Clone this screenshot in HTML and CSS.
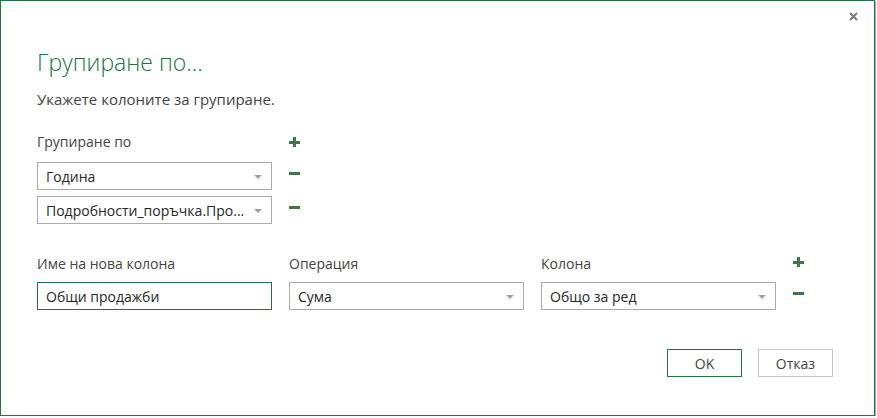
FILE: index.html
```html
<!DOCTYPE html>
<html lang="bg">
<head>
  <meta charset="UTF-8">
  <title>Групиране по</title>
<link rel="stylesheet" href="styles.css">
</head>
<body>
<div class="dialog">
  <div class="dialog-head">
    <button class="close" type="button" aria-label="Затвори">
      <svg width="9" height="9" viewBox="0 0 9 9"><path d="M1 1 L8 8 M8 1 L1 8" stroke="#7f7f7f" stroke-width="2.2"/></svg>
    </button>
  </div>

  <h1 class="title">Групиране по…</h1>
  <p class="intro">Укажете колоните за групиране.</p>

  <div class="group">
    <div class="row row-label">
      <span class="field label">Групиране по</span>
      <span class="icon plus"></span>
    </div>
    <div class="row row-select">
      <div class="field select"><span>Година</span><i class="arrow"></i></div>
      <span class="icon minus"></span>
    </div>
    <div class="row row-select">
      <div class="field select"><span>Подробности_поръчка.Про...</span><i class="arrow"></i></div>
      <span class="icon minus"></span>
    </div>
  </div>

  <div class="aggs">
    <div class="row row-label">
      <span class="field label">Име на нова колона</span>
      <span class="field label">Операция</span>
      <span class="field label">Колона</span>
      <span class="icon plus"></span>
    </div>
    <div class="row row-select">
      <div class="field input">Общи продажби</div>
      <div class="field select"><span>Сума</span><i class="arrow"></i></div>
      <div class="field select"><span>Общо за ред</span><i class="arrow"></i></div>
      <span class="icon minus"></span>
    </div>
  </div>

  <div class="actions">
    <button class="btn btn-ok" type="button">OK</button>
    <button class="btn" type="button">Отказ</button>
  </div>
</div>
</body>
</html>
```

FILE: styles.css
```css
* {
  box-sizing: border-box;
  margin: 0;
}

body {
  margin: 0;
  background: #fff;
  font-family: "Open Sans", "Noto Sans", sans-serif;
  font-size: 14px;
  color: #444;
}

.dialog {
  width: 875px;
  height: 416px;
  border: 1px solid #217346;
  box-shadow: 1px 1px 0 #a9a9a9;
  padding: 0 0 0 36px;
}

.dialog-head {
  display: flex;
  justify-content: flex-end;
  height: 33px;
  padding: 11px 16px 0 0;
}

.close {
  width: 9px;
  height: 9px;
  padding: 0;
  border: 0;
  background: none;
  display: block;
}

.close svg {
  display: block;
}

.title {
  margin-top: 12px;
  font-size: 23px;
  font-weight: 300;
  line-height: 32px;
  color: #217346;
}

.intro {
  margin-top: 11px;
  font-size: 15px;
  line-height: 20px;
  color: #444;
}

.group {
  margin-top: 23px;
}

.row {
  display: flex;
  column-gap: 17px;
}

.row-label {
  height: 20px;
  line-height: 20px;
  margin-bottom: 10px;
}

.row-select {
  height: 28px;
  margin-bottom: 6px;
}

.field {
  width: 235px;
  flex: none;
}

.select, .input {
  height: 28px;
  border: 1px solid #ababab;
  display: flex;
  align-items: center;
  justify-content: space-between;
  padding: 0 9px 0 8px;
  color: #262626;
  white-space: nowrap;
  overflow: hidden;
}

.input {
  border-color: #217346;
}

.arrow {
  width: 0;
  height: 0;
  border-left: 4px solid transparent;
  border-right: 4px solid transparent;
  border-top: 4px solid #a0a0a0;
  margin-top: 2px;
}

.icon {
  position: relative;
  width: 11px;
  flex: none;
}

.row-select .icon {
  height: 3px;
  margin-top: 10px;
}

.minus {
  background: #3b7a46;
}

.plus {
  height: 10px;
  margin-top: 5px;
}

.plus::before, .plus::after {
  content: "";
  position: absolute;
  background: #3b7a46;
}

.plus::before {
  left: 0;
  right: 0;
  top: 4px;
  height: 3px;
}

.plus::after {
  top: 0;
  bottom: 0;
  left: 4px;
  width: 3px;
}

.aggs {
  margin-top: 30px;
}

.aggs .row-label {
  margin-bottom: 8px;
}

.aggs .row-label .plus {
  margin-top: 3px;
}

.aggs .row-select .icon {
  margin-top: 10px;
}

.actions {
  display: flex;
  justify-content: flex-end;
  column-gap: 16px;
  margin-top: 39px;
  padding-right: 41px;
}

.btn {
  width: 75px;
  height: 28px;
  border: 1px solid #c6c6c6;
  background: #fff;
  font: inherit;
  color: #444;
  padding: 0;
}

.btn-ok {
  border-color: #217346;
}
```
